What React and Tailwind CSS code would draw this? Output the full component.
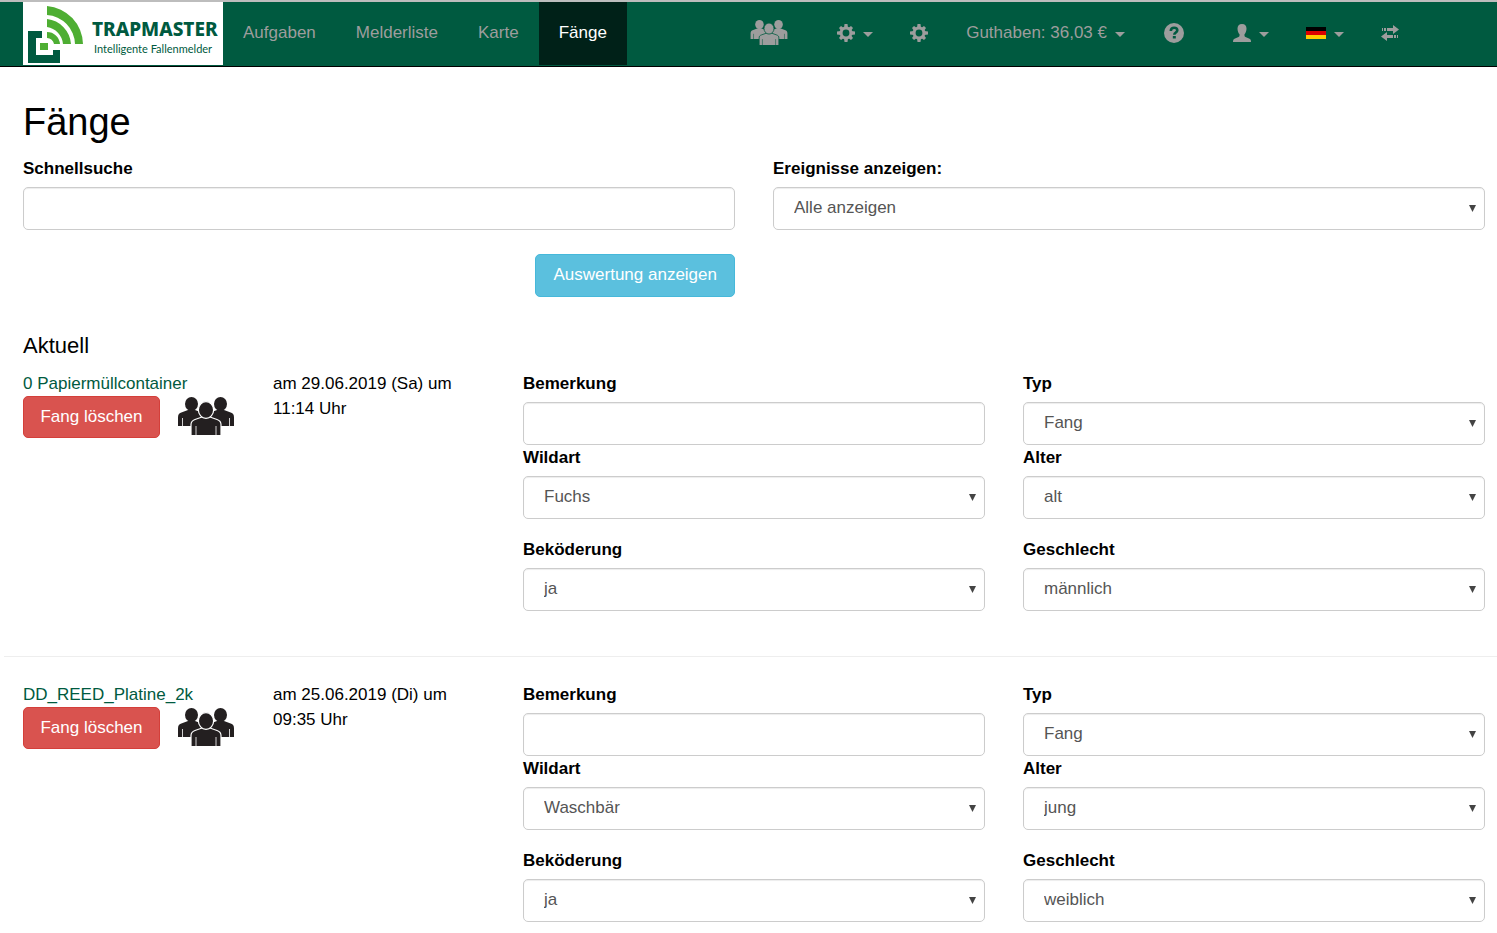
import { useState } from "react";

const catches = [
  {
    id: 1,
    name: "0 Papiermüllcontainer",
    date: "am 29.06.2019 (Sa) um 11:14 Uhr",
    type: "Fang",
    species: "Fuchs",
    age: "alt",
    bait: "ja",
    sex: "männlich",
  },
  {
    id: 2,
    name: "DD_REED_Platine_2k",
    date: "am 25.06.2019 (Di) um 09:35 Uhr",
    type: "Fang",
    species: "Waschbär",
    age: "jung",
    bait: "ja",
    sex: "weiblich",
  },
];

const Logo = () => (
  <a
    href="#"
    aria-label="Trapmaster"
    className="flex h-[63px] w-[200px] shrink-0 items-center bg-white pl-[5px] text-[#005a40]"
  >
    <svg viewBox="0 0 56 58" className="h-[58px] w-[56px] shrink-0">
      <path fill="#005a40" d="M0 26h14v7H8v17h17v-5h7v13H0z" />
      <g fill="#4eae33">
        <path d="M12 38h8v7h-8z" />
        <path d="M19 27a13 13 0 0 1 13 12h-6a7 7 0 0 0-7-6z" />
        <path d="M19 14a27 27 0 0 1 24 25h-8a19 19 0 0 0-16-17z" />
        <path d="M19 1a39 39 0 0 1 36 38h-8A30 30 0 0 0 19 10z" />
      </g>
    </svg>
    <span className="flex flex-col pt-[6px] pl-2">
      <span className="font-['Noto_Sans',sans-serif] text-[19px] leading-6 font-extrabold">
        TRAPMASTER
      </span>
      <span className="pl-0.5 font-[Lato,sans-serif] text-[11px] leading-4">
        Intelligente Fallenmelder
      </span>
    </span>
  </a>
);

const GroupIcon = ({ className, gap }) => (
  <svg viewBox="0 0 56 38" fill="currentColor" className={className}>
    <ellipse cx="13.500" cy="7" rx="6.500" ry="7" />
    <ellipse cx="42.500" cy="7" rx="6.500" ry="7" />
    <path d="M0 29v-8.500c0-3 1-4.300 4-5.200l6-2.300h7l6 2.300 4 2v11.700z" />
    <path d="M56 29v-8.500c0-3-1-4.300-4-5.200l-6-2.300h-7l-6 2.300-4 2v11.700z" />
    <path d="M4.500 21v8M51.500 21v8" stroke={gap} strokeWidth="0.800" />
    <g stroke={gap} strokeWidth="1.200">
      <path d="M13 39V27.500c0-3 1-4 4-5l7-2.500h8l7 2.500c3 1 4 2 4 5V39z" />
      <ellipse cx="28" cy="13" rx="7.600" ry="8.400" />
      <path d="M18 29v10M38 29v10" strokeWidth="0.800" />
    </g>
  </svg>
);

const CogIcon = () => (
  <svg viewBox="0 0 18 18" className="size-[18px]">
    <g fill="currentColor">
      <path d="M7.500 0h3l.5 4H7zM7.500 18h3l.5-4H7zM0 7.500v3l4 .5V7zM18 7.500v3l-4 .5V7z" />
      <path d="M2 4l2-2 3.500 2.500-3 3zM14 2l2 2-2.500 3.500-3-3zM16 14l-2 2-3.500-2.500 3-3zM4 16l-2-2 2.500-3.500 3 3z" />
    </g>
    <circle cx="9" cy="9" r="4.900" fill="none" stroke="currentColor" strokeWidth="3" />
  </svg>
);

const HelpIcon = () => (
  <svg viewBox="0 0 20 20" className="size-5">
    <circle cx="10" cy="10" r="10" fill="currentColor" />
    <path
      d="M6.800 8c0-2.200 1.400-3.300 3.300-3.300S13.300 5.800 13.300 7.300c0 2.200-3 2.200-3 4.500"
      fill="none"
      stroke="#005a40"
      strokeWidth="2.600"
    />
    <path d="M8.800 13h3v2.500h-3z" fill="#005a40" />
  </svg>
);

const UserIcon = () => (
  <svg viewBox="0 0 18 18" fill="currentColor" className="size-[18px]">
    <path d="M9 0c3 0 4.500 1.800 4.500 4.500 0 2.300-.8 4.600-2 5.800v1.500c0 .6.400 1 1 1.300l4 1.700c1 .5 1.500 1.200 1.500 3.200H0c0-2 .5-2.700 1.500-3.200l4-1.700c.6-.3 1-.7 1-1.300v-1.500c-1.200-1.200-2-3.500-2-5.800C4.500 1.800 6 0 9 0z" />
  </svg>
);

const FlagIcon = () => (
  <svg viewBox="0 0 20 12" className="h-3 w-5">
    <path d="M0 0h20v4H0z" fill="#000" />
    <path d="M0 4h20v4H0z" fill="#d00" />
    <path d="M0 8h20v4H0z" fill="#fc0" />
  </svg>
);

const TransferIcon = () => (
  <svg viewBox="0 0 18 16" fill="currentColor" className="h-4 w-[18px]">
    <path d="M1 3h1v3H1zM3 3h2v3H3zM6 3h6V0l6 4.500L12 9V6H6z" />
    <path d="M17 10h-1v3h1zM15 10h-2v3h2zM12 10H6V7l-6 4.500L6 16v-3h6z" />
  </svg>
);

const Caret = () => (
  <svg viewBox="0 0 10 5" fill="currentColor" className="mt-1 h-[5px] w-[10px]">
    <path d="M0 0h10L5 5z" />
  </svg>
);

const NavLink = ({ active, children }) => (
  <a
    href="#"
    className={
      active
        ? "flex h-[63px] items-center bg-[#002118] px-5 pb-0.5 text-white"
        : "flex h-[63px] items-center px-5 pb-0.5 hover:text-white"
    }
  >
    {children}
  </a>
);

const NavButton = ({ label, wide, children }) => (
  <button
    type="button"
    aria-label={label}
    className={
      wide
        ? "flex h-[63px] items-center gap-2 pr-[18px] pb-0.5 pl-[31px] hover:text-white"
        : "flex h-[63px] items-center gap-2 pr-[18px] pb-0.5 pl-[19px] hover:text-white"
    }
  >
    {children}
  </button>
);

const Navbar = () => (
  <header className="border-t-2 border-b border-t-[#bdbdbd] border-b-black bg-[#005a40] text-[#9d9d9d]">
    <nav className="flex h-16 pl-[23px]">
      <Logo />
      <NavLink>Aufgaben</NavLink>
      <NavLink>Melderliste</NavLink>
      <NavLink>Karte</NavLink>
      <NavLink active>Fänge</NavLink>
      <div className="mr-20 ml-auto flex">
        <NavButton label="Gruppen">
          <GroupIcon className="h-[25px] w-[38px]" gap="#005a40" />
        </NavButton>
        <NavButton label="Einstellungen" wide>
          <CogIcon />
          <Caret />
        </NavButton>
        <NavButton label="Optionen">
          <CogIcon />
        </NavButton>
        <button
          type="button"
          className="flex h-[63px] items-center gap-2 px-5 pb-0.5 hover:text-white"
        >
          Guthaben: 36,03 €
          <Caret />
        </button>
        <NavButton label="Hilfe">
          <HelpIcon />
        </NavButton>
        <NavButton label="Benutzer" wide>
          <UserIcon />
          <Caret />
        </NavButton>
        <NavButton label="Sprache">
          <FlagIcon />
          <Caret />
        </NavButton>
        <NavButton label="Wechseln">
          <TransferIcon />
        </NavButton>
      </div>
    </nav>
  </header>
);

const TextField = ({ id, label }) => {
  const [value, setValue] = useState("");

  return (
    <div>
      <label htmlFor={id} className="mb-[6px] block font-bold">
        {label}
      </label>
      <input
        id={id}
        type="text"
        value={value}
        onChange={(e) => setValue(e.target.value)}
        className="block h-[43px] w-full rounded-[5px] border border-[#ccc] bg-white px-[15px] text-[#555] shadow-[inset_0_1px_1px_rgba(0,0,0,0.075)]"
      />
    </div>
  );
};

const SelectField = ({ id, label, options, initial }) => {
  const [value, setValue] = useState(initial);

  return (
    <div>
      <label htmlFor={id} className="mb-[6px] block font-bold">
        {label}
      </label>
      <div className="relative">
        <select
          id={id}
          value={value}
          onChange={(e) => setValue(e.target.value)}
          className="block h-[43px] w-full appearance-none rounded-[5px] border border-[#ccc] bg-white px-5 pb-0.5 text-[#555] shadow-[inset_0_1px_1px_rgba(0,0,0,0.075)]"
        >
          {options.map((option) => (
            <option key={option}>{option}</option>
          ))}
        </select>
        <svg
          viewBox="0 0 7 7"
          fill="#444"
          className="pointer-events-none absolute top-[18px] right-[9px] size-[7px]"
        >
          <path d="M0 0h7L3.500 7z" />
        </svg>
      </div>
    </div>
  );
};

const CatchRow = ({ item }) => (
  <section className="grid grid-cols-12 gap-x-[38px] pr-3 pl-[23px]">
    <div className="col-span-2">
      <a href="#" className="block text-[#005a40] hover:underline">
        {item.name}
      </a>
      <div className="flex items-start gap-[18px]">
        <button
          type="button"
          className="h-[42px] w-[137px] shrink-0 rounded-[5px] border border-[#d43f3a] bg-[#d9534f] pb-0.5 text-white"
        >
          Fang löschen
        </button>
        <GroupIcon className="mt-px h-[38px] w-14 shrink-0 text-[#231f20]" gap="#fff" />
      </div>
    </div>
    <div className="col-span-2">{item.date}</div>
    {/* Left column of fields */}
    <div className="col-span-4">
      <TextField id={`note-${item.id}`} label="Bemerkung" />
      <SelectField
        id={`species-${item.id}`}
        label="Wildart"
        options={["Fuchs", "Waschbär"]}
        initial={item.species}
      />
      <div className="mt-[18px]">
        <SelectField
          id={`bait-${item.id}`}
          label="Beköderung"
          options={["ja", "nein"]}
          initial={item.bait}
        />
      </div>
    </div>
    {/* Right column of fields */}
    <div className="col-span-4">
      <SelectField
        id={`type-${item.id}`}
        label="Typ"
        options={["Fang"]}
        initial={item.type}
      />
      <SelectField
        id={`age-${item.id}`}
        label="Alter"
        options={["alt", "jung"]}
        initial={item.age}
      />
      <div className="mt-[18px]">
        <SelectField
          id={`sex-${item.id}`}
          label="Geschlecht"
          options={["männlich", "weiblich"]}
          initial={item.sex}
        />
      </div>
    </div>
  </section>
);

export default function App() {
  return (
    <div className="bg-white font-['Liberation_Sans',Arial,sans-serif] text-[17px] leading-[25px] text-black">
      <Navbar />
      <main className="pt-[34px]">
        <h1 className="mb-[13px] pl-[23px] text-[38px] leading-[42px]">Fänge</h1>
        <div className="grid grid-cols-2 gap-x-[38px] pr-3 pl-[23px]">
          <div>
            <TextField id="search" label="Schnellsuche" />
            <div className="mt-6 flex justify-end">
              <button
                type="button"
                className="h-[43px] rounded-[5px] border border-[#46b8da] bg-[#5bc0de] px-[17px] pb-0.5 text-white"
              >
                Auswertung anzeigen
              </button>
            </div>
          </div>
          <SelectField
            id="events"
            label="Ereignisse anzeigen:"
            options={["Alle anzeigen"]}
            initial="Alle anzeigen"
          />
        </div>
        <h4 className="mt-9 mb-3 pl-[23px] text-[22px] leading-[26px]">Aktuell</h4>
        {catches.map((item, index) => (
          <div key={item.id}>
            {index > 0 && <hr className="mt-[45px] mb-[25px] ml-1 border-[#eee]" />}
            <CatchRow item={item} />
          </div>
        ))}
      </main>
    </div>
  );
}
